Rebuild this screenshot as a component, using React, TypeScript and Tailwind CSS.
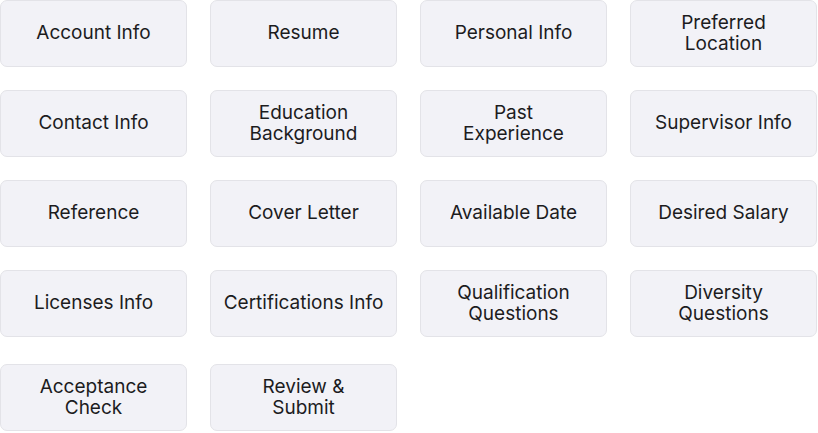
import React from "react";

const rows: string[][] = [
  ["Account Info", "Resume", "Personal Info", "Preferred\nLocation"],
  ["Contact Info", "Education\nBackground", "Past\nExperience", "Supervisor Info"],
  ["Reference", "Cover Letter", "Available Date", "Desired Salary"],
  ["Licenses Info", "Certifications Info", "Qualification\nQuestions", "Diversity\nQuestions"],
];
const last = ["Acceptance\nCheck", "Review &\nSubmit"];

function Tile({ label }: { label: string }) {
  return (
    <div className="h-[67px] pb-[2px] flex items-center justify-center text-center rounded-[7px] border border-[#e3e3e8] bg-[#f2f2f7] text-[#1c1c1e] text-[19px] leading-[21px] whitespace-pre-line">
      {label}
    </div>
  );
}

export default function App() {
  return (
    <div className="w-[818px] h-[433px] bg-white" style={{ fontFamily: "Inter, 'Noto Sans', sans-serif" }}>
      <div className="w-[817px] grid grid-cols-4 gap-x-[23px] gap-y-[23px]">
        {rows.flat().map((l, i) => (
          <Tile key={i} label={l} />
        ))}
      </div>
      <div className="w-[817px] grid grid-cols-4 gap-x-[23px] mt-[27px]">
        {last.map((l, i) => (
          <Tile key={i} label={l} />
        ))}
      </div>
    </div>
  );
}
